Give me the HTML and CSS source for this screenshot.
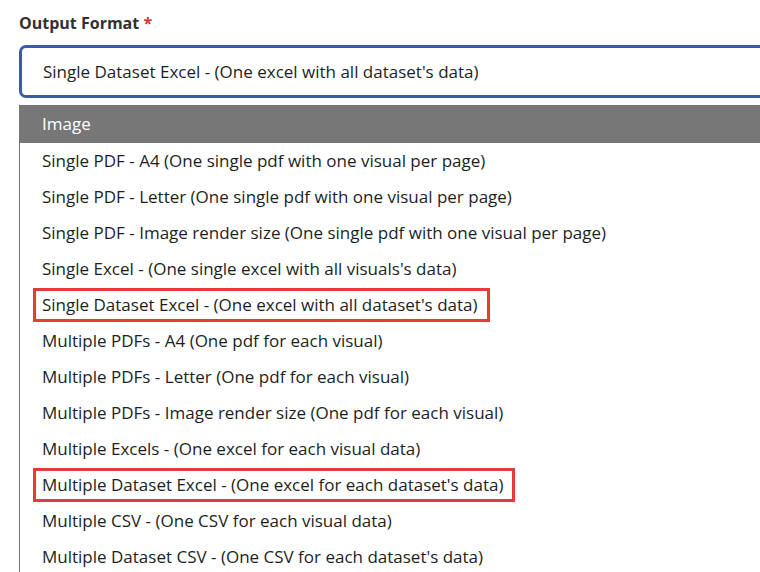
FILE: index.html
```html
<!DOCTYPE html>
<html lang="en">
<head>
    <meta charset="UTF-8">
    <meta name="viewport" content="width=device-width, initial-scale=1.0">
    <title>Export</title>
    <link rel="stylesheet" href="styles.css">
</head>
<body>
    <div class="field">
        <label class="field-label" for="output-format">Output Format <span class="required">*</span></label>

        <div class="select" id="output-format">Single Dataset Excel - (One excel with all dataset's data)</div>

        <ul class="options">
            <li class="group">Image</li>
            <li class="option"><span>Single PDF - A4 (One single pdf with one visual per page)</span></li>
            <li class="option"><span>Single PDF - Letter (One single pdf with one visual per page)</span></li>
            <li class="option"><span>Single PDF - Image render size (One single pdf with one visual per page)</span></li>
            <li class="option"><span>Single Excel - (One single excel with all visuals's data)</span></li>
            <li class="option marked"><span>Single Dataset Excel - (One excel with all dataset's data)</span></li>
            <li class="option"><span>Multiple PDFs - A4 (One pdf for each visual)</span></li>
            <li class="option"><span>Multiple PDFs - Letter (One pdf for each visual)</span></li>
            <li class="option"><span>Multiple PDFs - Image render size (One pdf for each visual)</span></li>
            <li class="option"><span>Multiple Excels - (One excel for each visual data)</span></li>
            <li class="option marked"><span>Multiple Dataset Excel - (One excel for each dataset's data)</span></li>
            <li class="option"><span>Multiple CSV - (One CSV for each visual data)</span></li>
            <li class="option"><span>Multiple Dataset CSV - (One CSV for each dataset's data)</span></li>
        </ul>
    </div>
</body>
</html>
```

FILE: styles.css
```css
html, body {
    margin: 0;
    overflow: hidden;
    background: #fff;
}
body {
    font-family: "Open Sans", "Noto Sans", sans-serif;
    font-size: 17px;
    color: #201f1e;
}
.field {
    padding: 12px 0 0 19px;
}
.field-label {
    display: block;
    font-weight: bold;
    font-size: 16px;
    color: #323130;
    line-height: 22px;
    margin-bottom: 11px;
}
.required {
    color: #d13438;
}
/* the control runs on past the right edge, so no right border */
.select {
    height: 47px;
    line-height: 47px;
    border: 3px solid #3a5ba6;
    border-right: none;
    border-radius: 7px 0 0 7px;
    padding-left: 21px;
    white-space: nowrap;
}
.options {
    list-style: none;
    margin: 7px 0 0;
    padding: 0;
    border-left: 1px solid #777;
}
.group {
    height: 38px;
    line-height: 38px;
    background: #777;
    color: #fff;
    padding-left: 22px;
}
.option {
    height: 36px;
    line-height: 36px;
    padding-left: 22px;
    white-space: nowrap;
}
.option.marked {
    padding-left: 13px;
}
.option.marked span {
    display: inline-block;
    line-height: 28px;
    padding: 0 9px 0 6px;
    border: 3px solid #e8393b;
}
```
